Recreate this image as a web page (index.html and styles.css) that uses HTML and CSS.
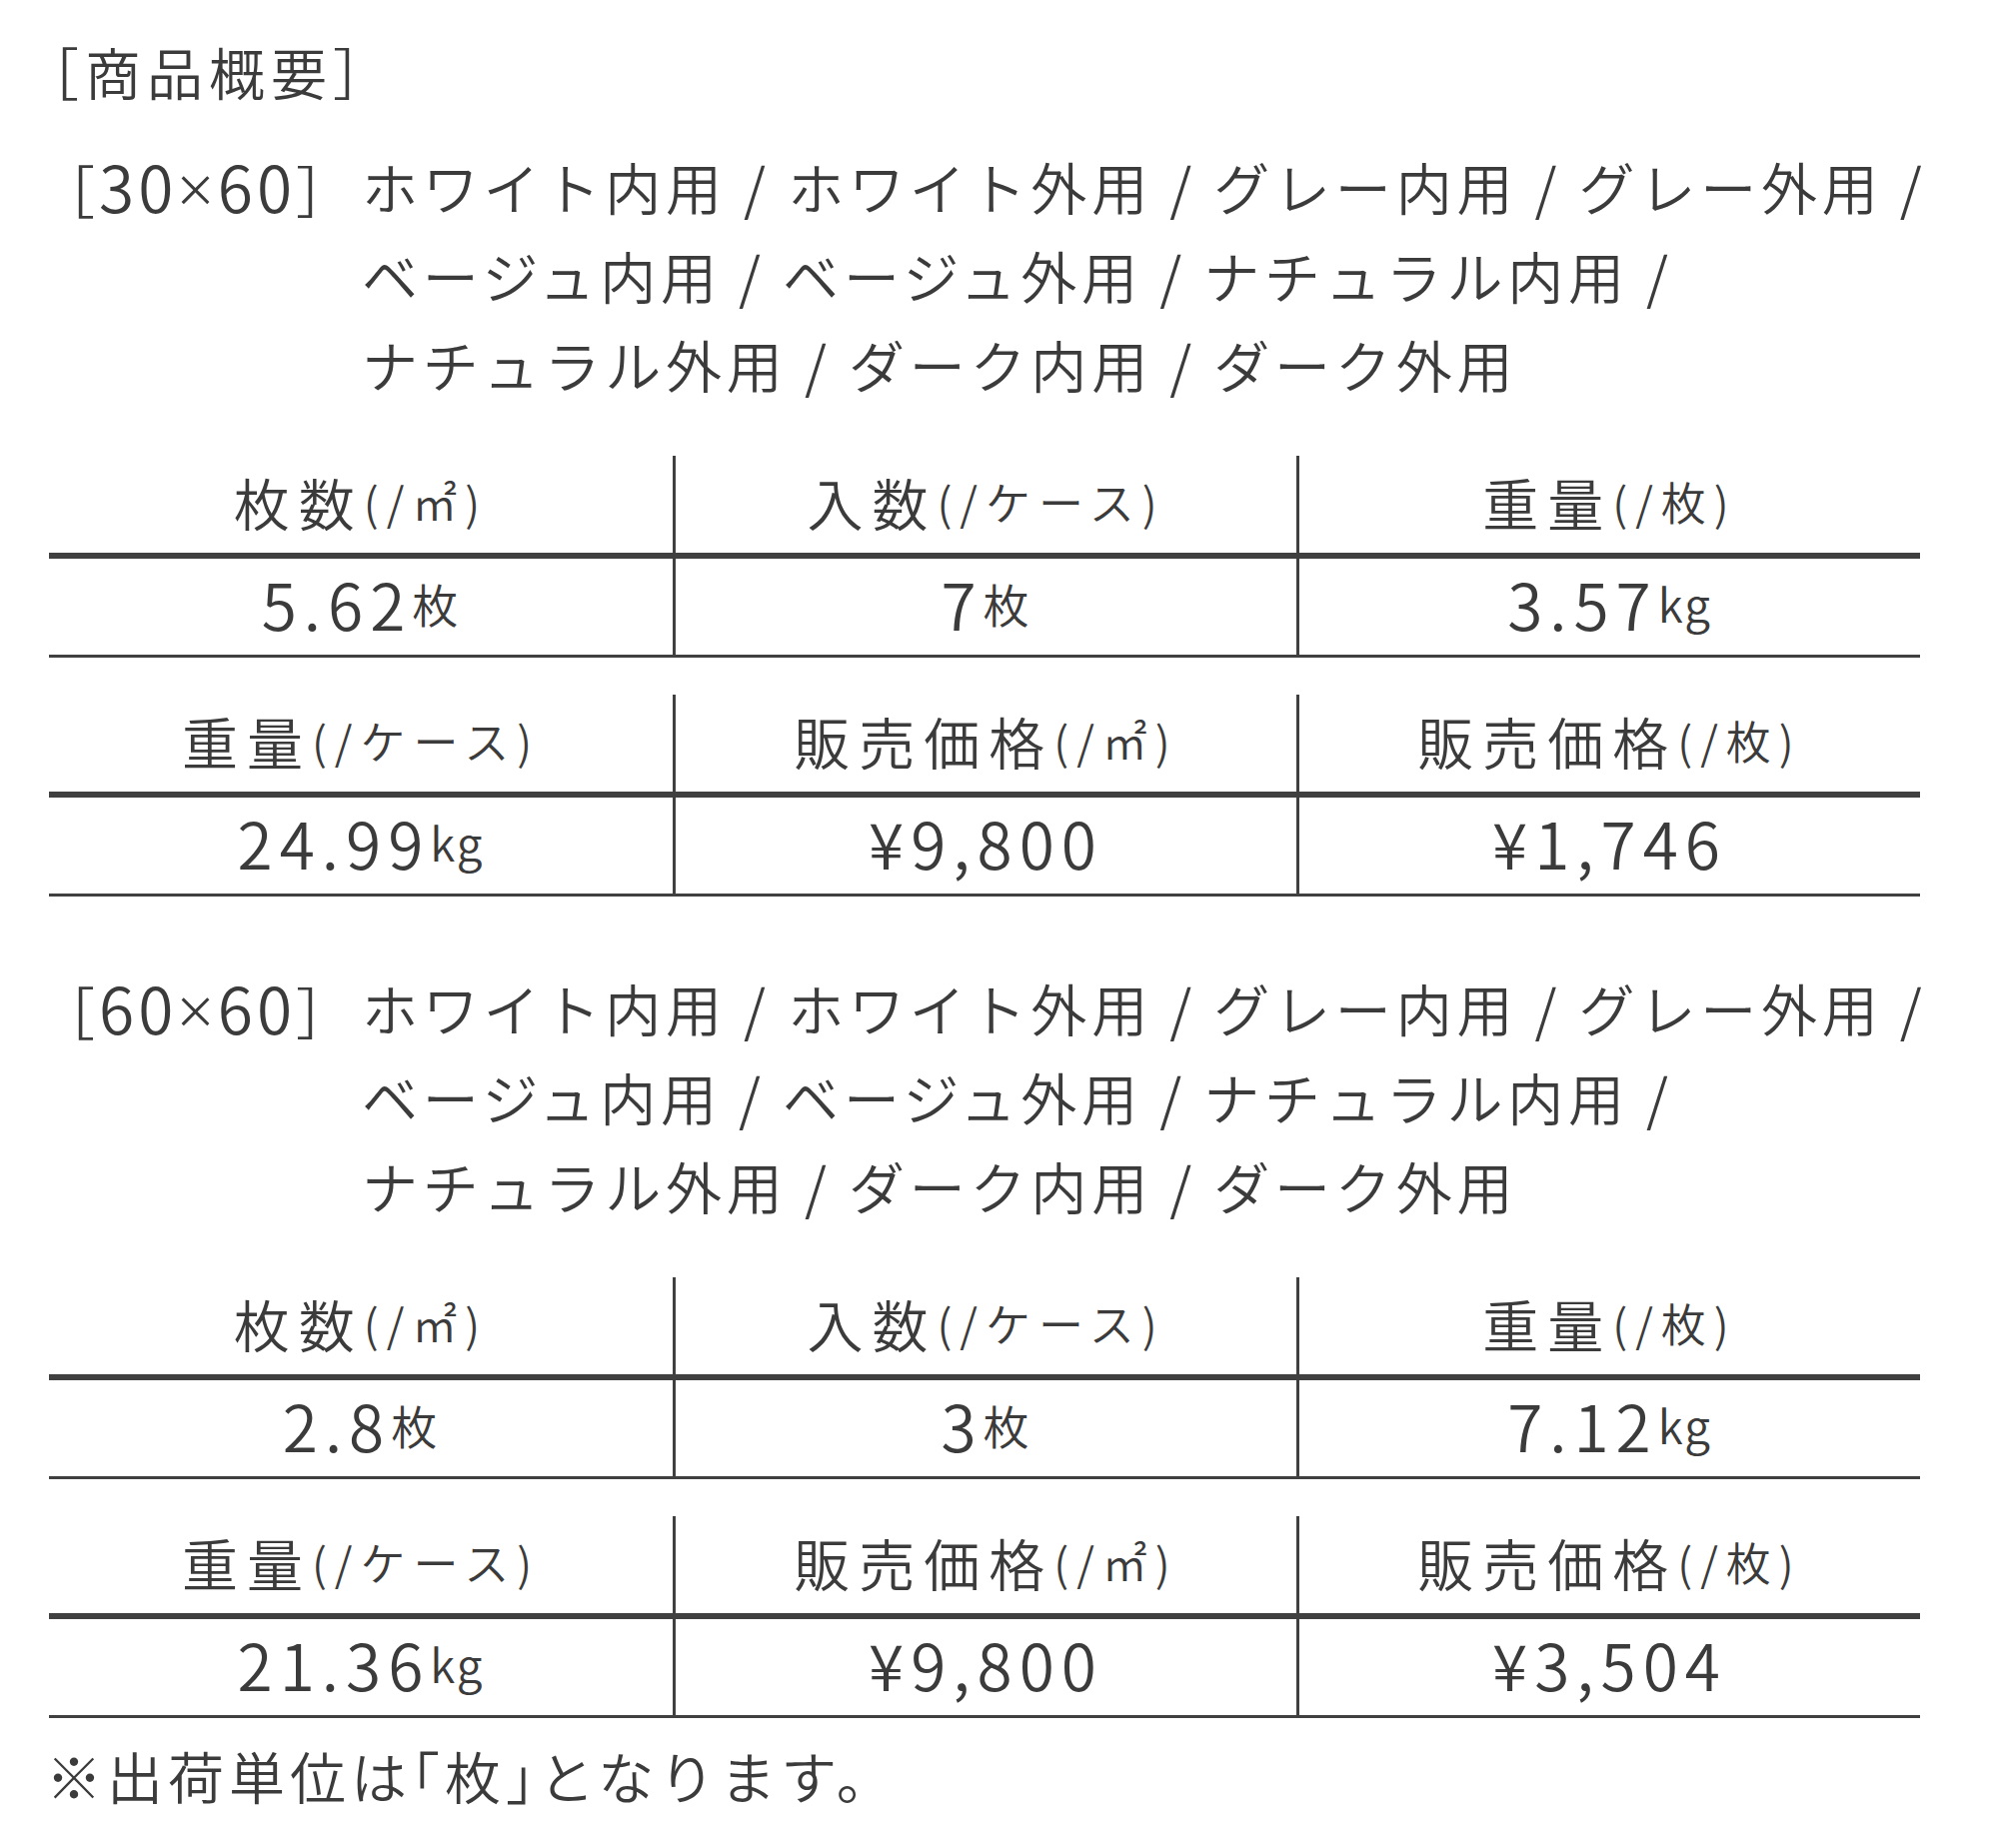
FILE: index.html
```html
<!DOCTYPE html>
<html lang="ja">
<head>
<meta charset="utf-8">
<title>商品概要</title>
<link rel="stylesheet" href="styles.css">
</head>
<body>
<main class="page">
  <h1 class="title"><span class="bk">［</span>商品概要<span class="bk">］</span></h1>

  <section class="variant">
    <div class="size"><span class="bk">［</span><span class="num">30<span class="x">×</span>60</span><span class="bk">］</span></div>
    <div class="colors">
      <p class="line">ホワイト内用 / ホワイト外用 / グレー内用 / グレー外用 /</p>
      <p class="line">ベージュ内用 / ベージュ外用 / ナチュラル内用 /</p>
      <p class="line">ナチュラル外用 / ダーク内用 / ダーク外用</p>
    </div>
  </section>

  <div class="spec">
    <div class="th"><span class="big">枚数</span><span class="sm">(/㎡)</span></div>
    <div class="th sep"><span class="big">入数</span><span class="sm">(/ケース)</span></div>
    <div class="th sep"><span class="big">重量</span><span class="sm">(/枚)</span></div>
    <div class="td"><span class="val">5.62</span><span class="unit">枚</span></div>
    <div class="td sep"><span class="val">7</span><span class="unit">枚</span></div>
    <div class="td sep"><span class="val">3.57</span><span class="unit">kg</span></div>
  </div>
  <div class="spec">
    <div class="th"><span class="big">重量</span><span class="sm">(/ケース)</span></div>
    <div class="th sep"><span class="big">販売価格</span><span class="sm">(/㎡)</span></div>
    <div class="th sep"><span class="big">販売価格</span><span class="sm">(/枚)</span></div>
    <div class="td"><span class="val">24.99</span><span class="unit">kg</span></div>
    <div class="td sep"><span class="val">¥9,800</span></div>
    <div class="td sep"><span class="val">¥1,746</span></div>
  </div>

  <section class="variant second">
    <div class="size"><span class="bk">［</span><span class="num">60<span class="x">×</span>60</span><span class="bk">］</span></div>
    <div class="colors">
      <p class="line">ホワイト内用 / ホワイト外用 / グレー内用 / グレー外用 /</p>
      <p class="line">ベージュ内用 / ベージュ外用 / ナチュラル内用 /</p>
      <p class="line">ナチュラル外用 / ダーク内用 / ダーク外用</p>
    </div>
  </section>

  <div class="spec">
    <div class="th"><span class="big">枚数</span><span class="sm">(/㎡)</span></div>
    <div class="th sep"><span class="big">入数</span><span class="sm">(/ケース)</span></div>
    <div class="th sep"><span class="big">重量</span><span class="sm">(/枚)</span></div>
    <div class="td"><span class="val">2.8</span><span class="unit">枚</span></div>
    <div class="td sep"><span class="val">3</span><span class="unit">枚</span></div>
    <div class="td sep"><span class="val">7.12</span><span class="unit">kg</span></div>
  </div>
  <div class="spec">
    <div class="th"><span class="big">重量</span><span class="sm">(/ケース)</span></div>
    <div class="th sep"><span class="big">販売価格</span><span class="sm">(/㎡)</span></div>
    <div class="th sep"><span class="big">販売価格</span><span class="sm">(/枚)</span></div>
    <div class="td"><span class="val">21.36</span><span class="unit">kg</span></div>
    <div class="td sep"><span class="val">¥9,800</span></div>
    <div class="td sep"><span class="val">¥3,504</span></div>
  </div>

  <p class="note">※出荷単位は<span class="bk">「</span>枚<span class="bk">」</span>となります。</p>
</main>
</body>
</html>
```

FILE: styles.css
```css
html, body {
  margin: 0;
  padding: 0;
  background: #ffffff;
}

body {
  font-family: "Noto Sans CJK JP", "Noto Sans", sans-serif;
  font-weight: 350;
  color: #3b3b3b;
}

.page {
  width: 1872px;
  padding: 26px 0 40px 49px;
}

.bk {
  font-feature-settings: "halt" 1;
}

.title {
  margin: 0;
  padding-left: 2px;
  font-size: 56px;
  font-weight: 350;
  line-height: 89px;
  letter-spacing: 6px;
}

.variant {
  display: grid;
  grid-template-columns: 313px 1fr;
  margin-top: 26px;
}

.variant.second {
  margin-top: 66px;
}

.size {
  padding-left: 18px;
  font-size: 56px;
  line-height: 89px;
  letter-spacing: 4px;
  white-space: nowrap;
}

.num {
  font-size: 64px;
}

.x {
  font-family: "Noto Sans", sans-serif;
}

.colors {
  display: flex;
  flex-direction: column;
}

.line {
  margin: 0;
  font-size: 56px;
  line-height: 89px;
  letter-spacing: 4.8px;
  white-space: nowrap;
}

.spec {
  display: grid;
  grid-template-columns: repeat(3, 1fr);
  margin-top: 37px;
}

.variant + .spec {
  margin-top: 48px;
}

.th,
.td {
  display: flex;
  align-items: center;
  justify-content: center;
  white-space: nowrap;
  box-sizing: border-box;
}

.th {
  height: 103px;
  border-bottom: 6px solid #404040;
  padding-bottom: 6px;
}

.td {
  height: 99px;
  border-bottom: 3px solid #404040;
  padding-bottom: 8px;
}

.sep {
  border-left: 3px solid #404040;
}

.big {
  font-size: 56px;
  letter-spacing: 9px;
  line-height: 1;
}

.sm {
  font-size: 45px;
  letter-spacing: 8px;
  line-height: 1;
}

.val {
  font-size: 64px;
  letter-spacing: 7px;
  line-height: 1;
}

.unit {
  font-size: 46px;
  letter-spacing: 2px;
  line-height: 1;
}

.note {
  margin: 12px 0 0 -3px;
  font-size: 56px;
  line-height: 89px;
  letter-spacing: 5px;
  white-space: nowrap;
}
```
